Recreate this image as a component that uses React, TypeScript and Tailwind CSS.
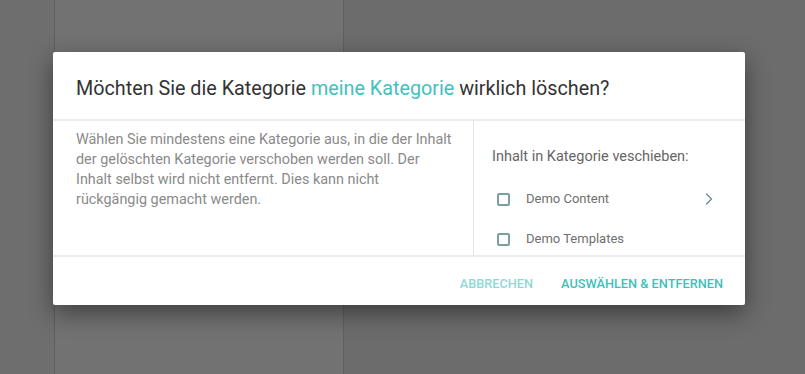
import { ChevronRight } from "lucide-react";

const categories = [
  { id: 1, name: "Demo Content", hasChildren: true },
  { id: 2, name: "Demo Templates", hasChildren: false },
];

export default function App() {
  return (
    <div className="relative w-[805px] h-[374px] overflow-hidden font-['Roboto',sans-serif]">
      {/* Page behind the overlay */}
      <div className="flex h-full">
        <div className="w-[55px] bg-[#6e6e6e] border-r border-[#5f5f5f]" />
        <div className="w-[289px] bg-[#727272] border-r border-[#606060]" />
        <div className="flex-1 bg-[#6c6c6c]" />
      </div>

      {/* Dialog */}
      <div className="absolute left-[53px] top-[52px] w-[692px] bg-white rounded-[2px] shadow-[0_8px_24px_rgba(0,0,0,0.45)]">
        <div className="h-[69px] flex items-center px-[23px] pt-[7px] border-b-2 border-[#ececec]">
          <h1 className="text-[19.75px] text-[#333]">
            Möchten Sie die Kategorie{" "}
            <span className="text-[#43c1bb]">meine Kategorie</span> wirklich
            löschen?
          </h1>
        </div>

        <div className="flex h-[136px] border-b-2 border-[#ececec]">
          <p className="w-[421px] pl-[23px] pt-[9px] text-[14.4px] leading-[20px] text-[#8a8a8a] border-r border-[#e6e6e6] whitespace-nowrap">
            Wählen Sie mindestens eine Kategorie aus, in die der Inhalt
            <br />
            der gelöschten Kategorie verschoben werden soll. Der
            <br />
            Inhalt selbst wird nicht entfernt. Dies kann nicht
            <br />
            rückgängig gemacht werden.
          </p>
          <div className="flex-1 pl-[18px] pr-[26px] pt-[26px]">
            <div className="text-[14.5px] leading-[20px] text-[#666]">
              Inhalt in Kategorie veschieben:
            </div>
            <ul className="mt-[12px]">
              {categories.map((c) => (
                <li key={c.id} className="flex items-center h-[40px]">
                  <span className="ml-[5px] w-[13px] h-[13px] border-2 border-[#7a9ea2] rounded-[2px]" />
                  <span className="ml-[16px] text-[13px] text-[#6f6f6f]">
                    {c.name}
                  </span>
                  {c.hasChildren && (
                    <ChevronRight
                      className="ml-auto text-[#6b8f96]"
                      size={20}
                      strokeWidth={1.6}
                    />
                  )}
                </li>
              ))}
            </ul>
          </div>
        </div>

        <div className="h-[48px] flex items-center justify-end pr-[22px] pt-[5px] gap-[28px]">
          <button
            type="button"
            className="text-[12.75px] font-medium uppercase text-[#8fd9d5]"
          >
            Abbrechen
          </button>
          <button
            type="button"
            className="text-[12.75px] font-medium uppercase text-[#3fbfb9]"
          >
            Auswählen &amp; Entfernen
          </button>
        </div>
      </div>
    </div>
  );
}
